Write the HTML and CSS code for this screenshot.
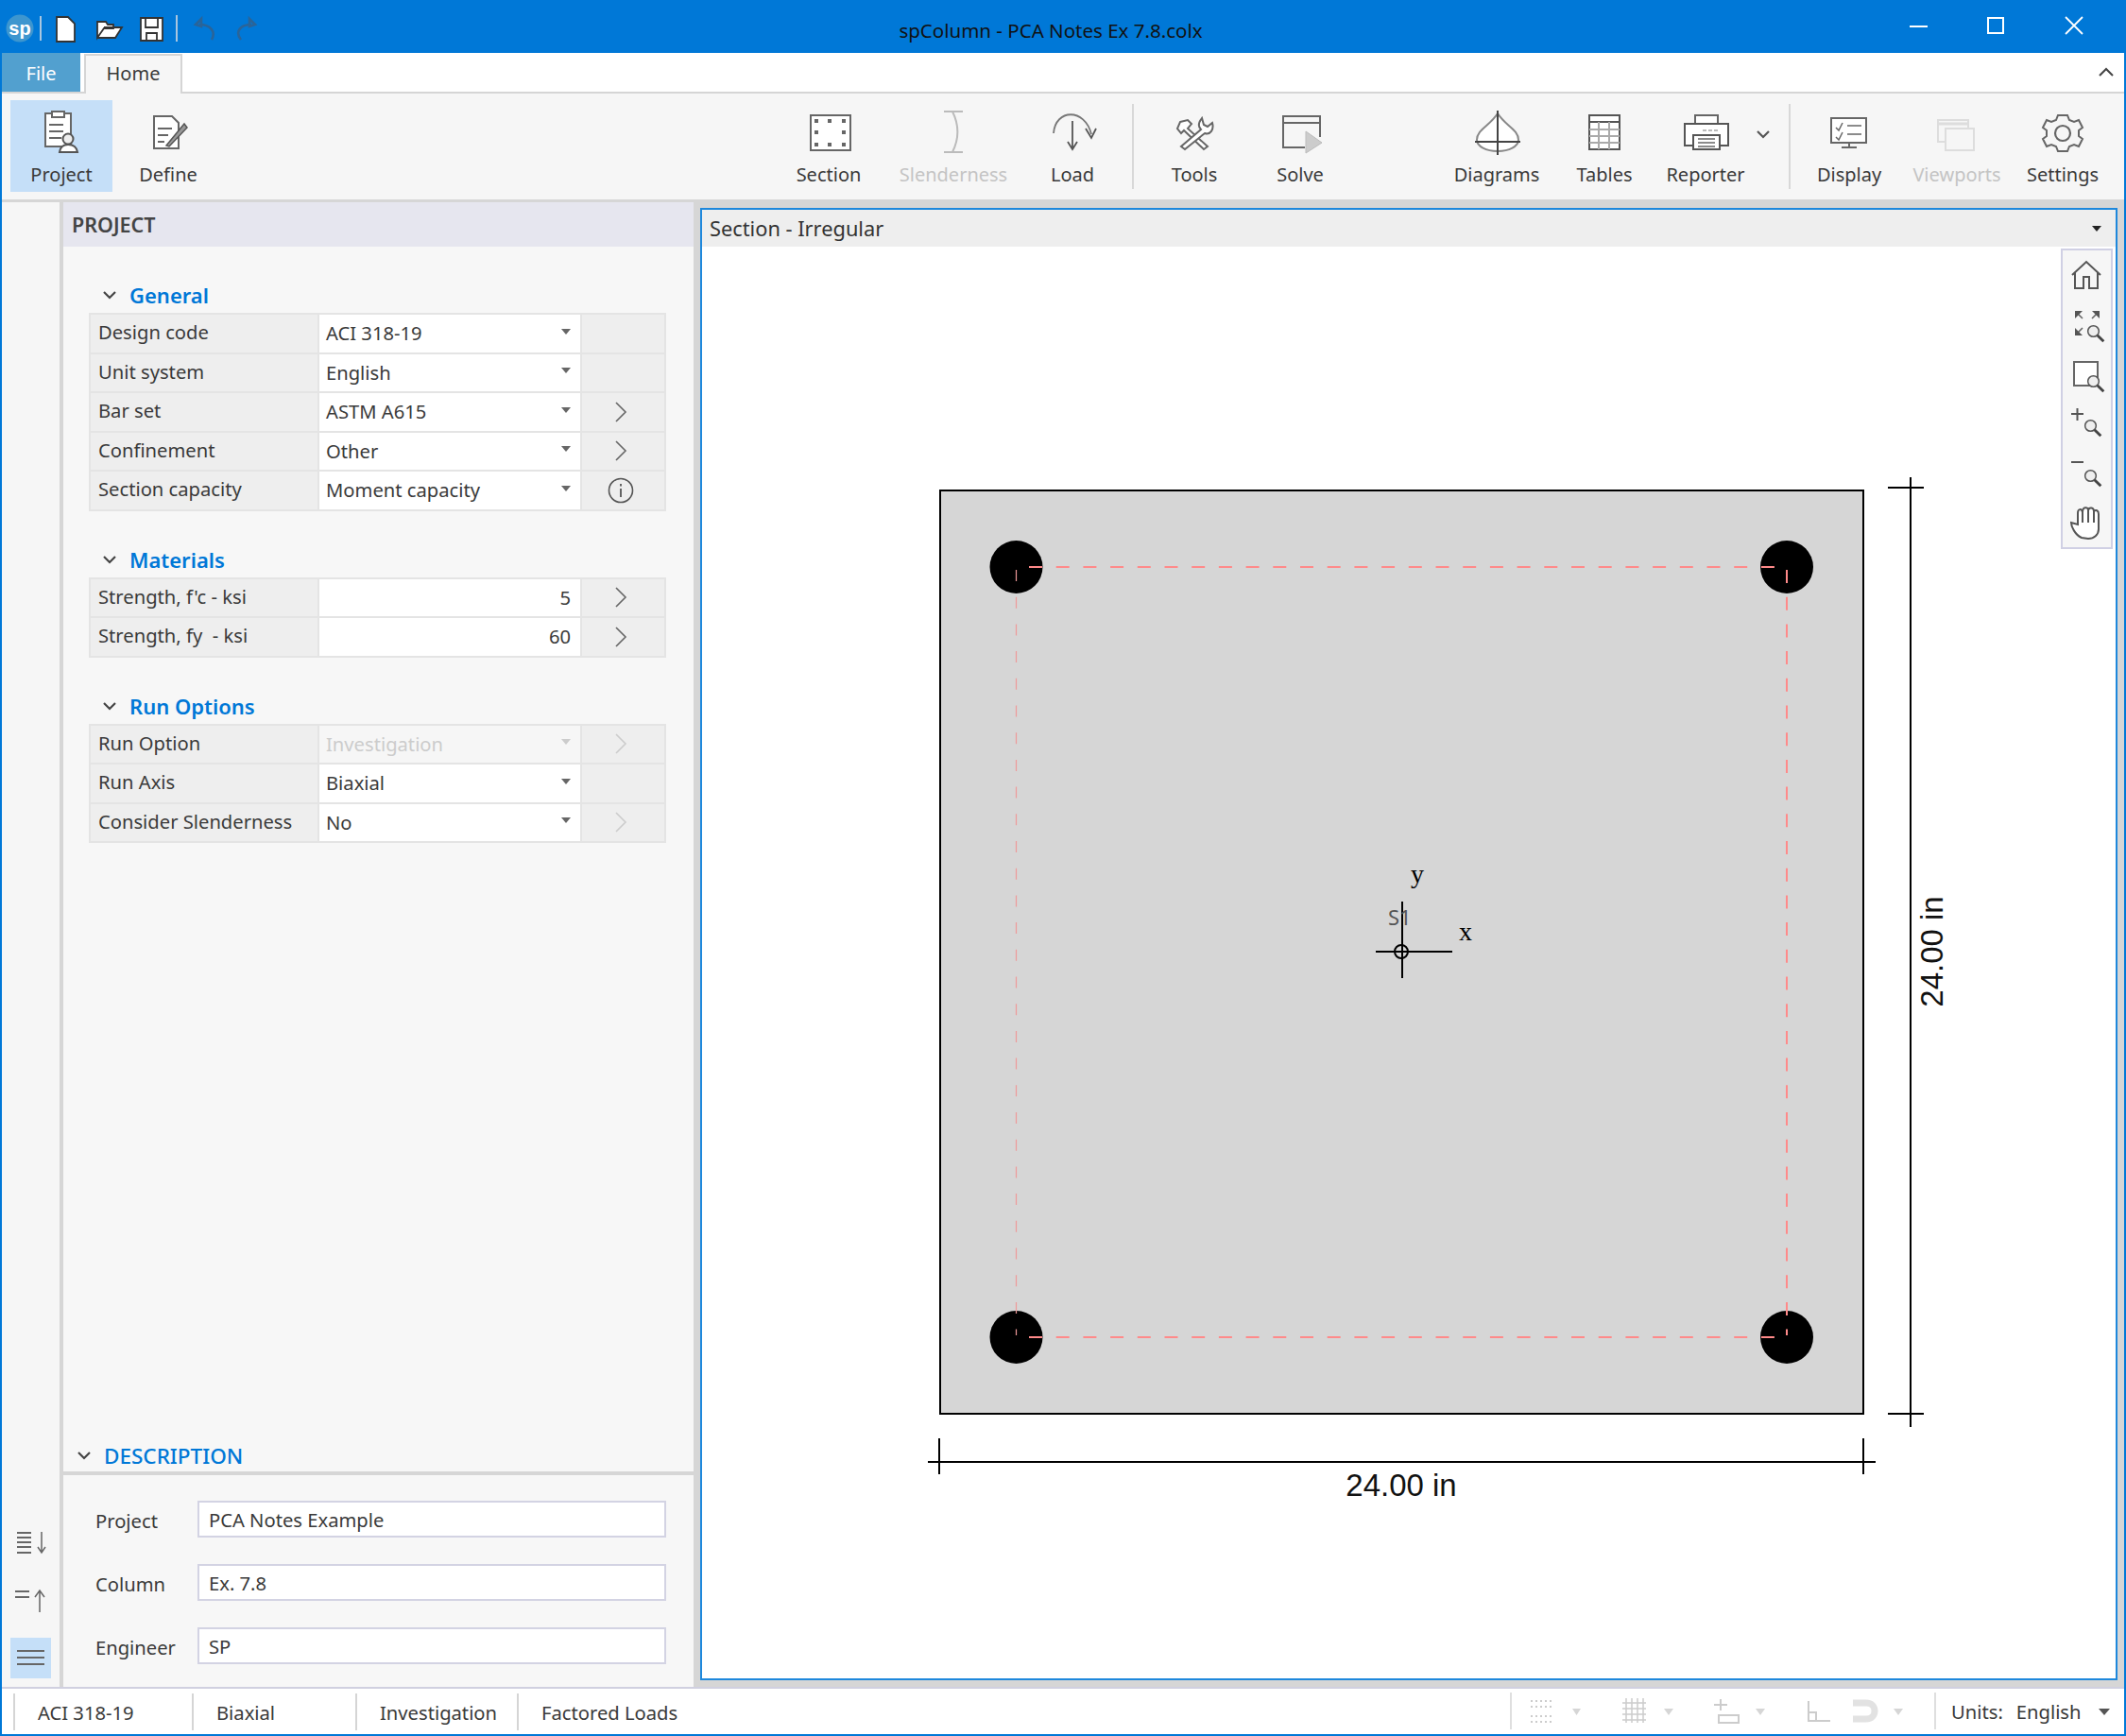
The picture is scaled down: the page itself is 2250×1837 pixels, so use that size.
FILE: index.html
```html
<!DOCTYPE html>
<html lang="en">
<head>
<meta charset="utf-8">
<title>spColumn - PCA Notes Ex 7.8.colx</title>
<link rel="stylesheet" href="styles.css">
</head>
<body>
<svg class="defs" width="0" height="0">
  <defs>
    <symbol id="chev-r" viewBox="0 0 16 24"><path d="M3 2 L13 12 L3 22" fill="none" stroke="currentColor" stroke-width="1.6"/></symbol>
    <symbol id="chev-d" viewBox="0 0 16 12"><path d="M2 3 L8 9 L14 3" fill="none" stroke="currentColor" stroke-width="2.2"/></symbol>
    <symbol id="mag" viewBox="0 0 24 24"><circle cx="9" cy="9" r="7" fill="#eee" stroke="#555" stroke-width="1.8"/><path d="M14 14 L22 22" stroke="#444" stroke-width="3.4"/></symbol>
  </defs>
</svg>
<div class="window">
  <header class="titlebar">
    <svg class="qat" viewBox="2 0 298 56">
      <circle cx="21" cy="30" r="14.5" fill="#3d96cf"/>
      <text x="21" y="37" class="sp-text" text-anchor="middle">sp</text>
      <path d="M43 17V43M187 16V44" stroke="#a9c6df" stroke-width="2"/>
      <path d="M60 18H72L79 25V44H60Z" fill="#fff" stroke="#333" stroke-width="1.8"/>
      <path d="M103 40V23H112L114 26H120V30H110L103 40ZM103 40H122L129 29H110" fill="#fff" stroke="#333" stroke-width="1.8"/>
      <path d="M149 19H172V43H149Z" fill="#fff" stroke="#333" stroke-width="1.8"/>
      <path d="M154 19V29H167V19M155 43V35H166V43" fill="none" stroke="#333" stroke-width="1.8"/>
      <path d="M207 26L213 20V28ZM211 26C222 26 229 33 224 42" fill="none" stroke="#2a6498" stroke-width="2.6"/>
      <path d="M270 26L264 20V28ZM266 26C255 26 248 33 255 42" fill="none" stroke="#2a6498" stroke-width="2.6"/>
    </svg>
    <div class="title">spColumn - PCA Notes Ex 7.8.colx</div>
    <svg class="winbtns" viewBox="1924 0 324 56">
      <path d="M2021 28H2040" stroke="#fff" stroke-width="2"/>
      <rect x="2104" y="19" width="16" height="16" fill="none" stroke="#fff" stroke-width="2"/>
      <path d="M2186 18L2204 36M2204 18L2186 36" stroke="#fff" stroke-width="1.8"/>
    </svg>
  </header>

  <nav class="tabs">
    <div class="tab-file">File</div>
    <div class="tab-home">Home</div>
    <svg class="collapse" viewBox="0 0 18 12"><path d="M2 10L9 3L16 10" fill="none" stroke="#444" stroke-width="2"/></svg>
  </nav>

  <section class="ribbon">
    <div class="rb active">
      <svg class="ri" viewBox="36 112 60 56"><path d="M49 120H76V155H49Z" fill="#fff" stroke="#666" stroke-width="2"/><path d="M56 124V118H69V124Z" fill="#fff" stroke="#666" stroke-width="2"/><path d="M53 132H68M53 139H68M53 146H66" stroke="#666" stroke-width="2"/><circle cx="73" cy="147" r="5.5" fill="#eee" stroke="#555" stroke-width="2"/><path d="M64 161C65 154 69 153 73 153C78 153 82 155 83 161Z" fill="#fff" stroke="#555" stroke-width="2"/></svg>
      <span>Project</span>
    </div>
    <div class="rb">
      <svg class="ri" viewBox="148 112 60 56"><path d="M163 123H182L189 130V157H163Z" fill="#fff" stroke="#666" stroke-width="2"/><path d="M167 136H182M167 143H178M167 150H174" stroke="#666" stroke-width="2"/><path d="M176 154L195 131L198 135L179 155Z" fill="#999" stroke="#555" stroke-width="1.5"/></svg>
      <span>Define</span>
    </div>
    <div></div>
    <div class="rb">
      <svg class="ri" viewBox="847 112 60 56"><rect x="858" y="122" width="42" height="37" fill="#fff" stroke="#666" stroke-width="2"/><g class="dots"><rect x="862" y="126" width="4" height="4"/><rect x="876" y="126" width="4" height="4"/><rect x="891" y="126" width="4" height="4"/><rect x="862" y="138" width="4" height="4"/><rect x="891" y="138" width="4" height="4"/><rect x="862" y="151" width="4" height="4"/><rect x="876" y="151" width="4" height="4"/><rect x="891" y="151" width="4" height="4"/></g></svg>
      <span>Section</span>
    </div>
    <div class="rb off">
      <svg class="ri" viewBox="979 112 60 56"><path d="M999 118H1019M999 161H1019M1008 118C1015 132 1015 147 1008 161" fill="none" stroke="#bbb" stroke-width="2"/></svg>
      <span>Slenderness</span>
    </div>
    <div class="rb">
      <svg class="ri" viewBox="1105 112 60 56"><path d="M1115 141C1117 115 1148 114 1155 142" fill="none" stroke="#777" stroke-width="1.8"/><path d="M1135 128V158M1130 150L1135 158L1140 150" fill="none" stroke="#555" stroke-width="1.8"/><path d="M1149 136L1155 146L1160 136" fill="none" stroke="#555" stroke-width="1.8"/></svg>
      <span>Load</span>
    </div>
    <div class="sep"></div>
    <div class="rb">
      <svg class="ri" viewBox="1234 112 60 56"><path d="M1249 129L1257 127L1261 131L1257 136L1278 155L1274 158L1253 138L1250 141L1246 136Z" fill="#fff" stroke="#666" stroke-width="2"/><path d="M1272 125C1268 130 1268 134 1271 137L1250 155L1254 158L1275 141C1281 143 1285 137 1283 130L1278 134L1274 132Z" fill="#fff" stroke="#666" stroke-width="2"/></svg>
      <span>Tools</span>
    </div>
    <div class="rb">
      <svg class="ri" viewBox="1346 112 60 56"><path d="M1381 156H1358V123H1397V145M1358 130H1397" fill="none" stroke="#666" stroke-width="2"/><path d="M1382 139L1399 151L1382 162Z" fill="#ccc" stroke="#bbb" stroke-width="1"/></svg>
      <span>Solve</span>
    </div>
    <div></div>
    <div class="rb">
      <svg class="ri" viewBox="1554 112 60 56"><path d="M1585 120C1577 133 1563 137 1563 148C1563 155 1573 160 1585 160C1597 160 1607 155 1607 148C1607 137 1593 133 1585 120Z" fill="#fff" stroke="#888" stroke-width="2"/><path d="M1585 117V164M1561 150H1609" stroke="#444" stroke-width="2"/></svg>
      <span>Diagrams</span>
    </div>
    <div class="rb">
      <svg class="ri" viewBox="1668 112 60 56"><rect x="1682" y="122" width="32" height="36" fill="#fff" stroke="#555" stroke-width="2"/><path d="M1682 129H1714" stroke="#555" stroke-width="2"/><path d="M1682 137H1714M1682 144H1714M1682 151H1714M1692 129V158M1703 129V158" stroke="#aaa" stroke-width="2"/></svg>
      <span>Tables</span>
    </div>
    <div class="rb">
      <svg class="ri" viewBox="1775 112 60 56"><rect x="1794" y="122" width="24" height="9" fill="#fff" stroke="#666" stroke-width="2"/><path d="M1791 154H1783V131H1829V154H1821" fill="#fff" stroke="#555" stroke-width="2"/><path d="M1792 143H1820V158H1792Z" fill="#fff" stroke="#555" stroke-width="2"/><path d="M1797 147H1815M1797 151H1815M1797 155H1815" stroke="#666" stroke-width="1.6"/><path d="M1802 138H1819" stroke="#777" stroke-width="1" stroke-dasharray="4 2"/></svg>
      <span>Reporter</span>
    </div>
    <div class="rb-more"><svg class="chev-more"><use href="#chev-d"/></svg></div>
    <div class="sep"></div>
    <div class="rb">
      <svg class="ri" viewBox="1927 112 60 56"><rect x="1938" y="125" width="37" height="26" fill="#fff" stroke="#666" stroke-width="2"/><path d="M1943 135L1946 138L1950 130M1943 145L1946 148L1950 140M1955 133H1970M1955 142H1970" fill="none" stroke="#666" stroke-width="1.5"/><path d="M1957 151V155M1949 156H1965" stroke="#666" stroke-width="2"/></svg>
      <span>Display</span>
    </div>
    <div class="rb off">
      <svg class="ri" viewBox="2041 112 60 56"><rect x="2051" y="127" width="32" height="23" fill="none" stroke="#ddd" stroke-width="2"/><path d="M2051 131H2083" stroke="#ddd" stroke-width="3"/><rect x="2059" y="136" width="30" height="23" fill="#f6f6f6" stroke="#ddd" stroke-width="2"/></svg>
      <span>Viewports</span>
    </div>
    <div class="rb">
      <svg class="ri" viewBox="2154 112 60 56"><circle cx="2184" cy="141" r="8" fill="none" stroke="#666" stroke-width="2.2"/><path d="M2179 122H2189L2191 127L2196 129L2201 127L2205 135L2201 138V144L2205 147L2201 155L2196 153L2191 155L2189 160H2179L2177 155L2172 153L2167 155L2163 147L2167 144V138L2163 135L2167 127L2172 129L2177 127Z" fill="none" stroke="#666" stroke-width="2"/></svg>
      <span>Settings</span>
    </div>
  </section>

  <main class="main">
    <aside class="sidebar">
      <div class="sb"><svg viewBox="11 1608 43 43"><path d="M18 1621H33M18 1626H33M18 1631H33M18 1636H33M18 1642H33" stroke="#666" stroke-width="2"/><path d="M44 1620V1642M40 1636L44 1642L48 1636" fill="none" stroke="#666" stroke-width="1.5"/></svg></div>
      <div class="sb"><svg viewBox="11 1671 43 43"><path d="M16 1684H31M16 1690H31" stroke="#666" stroke-width="2"/><path d="M42 1706V1684M37 1690L42 1683L47 1690" fill="none" stroke="#666" stroke-width="1.5"/></svg></div>
      <div class="sb on"><svg viewBox="11 1733 43 43"><path d="M18 1747H47M18 1754H47M18 1761H47" stroke="#666" stroke-width="2"/></svg></div>
    </aside>

    <section class="panel">
      <div class="panel-head">PROJECT</div>
      <div class="panel-body">
        <h3 class="grp"><svg class="chev"><use href="#chev-d"/></svg>General</h3>
        <div class="table">
          <div class="lbl">Design code</div><div class="val"><span>ACI 318-19</span><i class="tri"></i></div><div class="act"></div>
          <div class="lbl">Unit system</div><div class="val"><span>English</span><i class="tri"></i></div><div class="act"></div>
          <div class="lbl">Bar set</div><div class="val"><span>ASTM A615</span><i class="tri"></i></div><div class="act"><svg class="go"><use href="#chev-r"/></svg></div>
          <div class="lbl">Confinement</div><div class="val"><span>Other</span><i class="tri"></i></div><div class="act"><svg class="go"><use href="#chev-r"/></svg></div>
          <div class="lbl">Section capacity</div><div class="val"><span>Moment capacity</span><i class="tri"></i></div><div class="act"><svg class="info" viewBox="0 0 28 28"><circle cx="14" cy="14" r="12.5" fill="none" stroke="#555" stroke-width="1.6"/><path d="M14 12V21M14 7V9.500" stroke="#555" stroke-width="1.8"/></svg></div>
        </div>
        <h3 class="grp"><svg class="chev"><use href="#chev-d"/></svg>Materials</h3>
        <div class="table">
          <div class="lbl">Strength, f'c - ksi</div><div class="val num">5</div><div class="act"><svg class="go"><use href="#chev-r"/></svg></div>
          <div class="lbl">Strength, fy&nbsp; - ksi</div><div class="val num">60</div><div class="act"><svg class="go"><use href="#chev-r"/></svg></div>
        </div>
        <h3 class="grp"><svg class="chev"><use href="#chev-d"/></svg>Run Options</h3>
        <div class="table">
          <div class="lbl">Run Option</div><div class="val dis"><span>Investigation</span><i class="tri"></i></div><div class="act"><svg class="go faint"><use href="#chev-r"/></svg></div>
          <div class="lbl">Run Axis</div><div class="val"><span>Biaxial</span><i class="tri"></i></div><div class="act"></div>
          <div class="lbl">Consider Slenderness</div><div class="val"><span>No</span><i class="tri"></i></div><div class="act"><svg class="go faint"><use href="#chev-r"/></svg></div>
        </div>
      </div>
      <div class="desc-head"><svg class="chev"><use href="#chev-d"/></svg>DESCRIPTION</div>
      <div class="desc">
        <label class="fld"><span>Project</span><div class="inp">PCA Notes Example</div></label>
        <label class="fld"><span>Column</span><div class="inp">Ex. 7.8</div></label>
        <label class="fld"><span>Engineer</span><div class="inp">SP</div></label>
      </div>
    </section>

    <section class="view">
      <div class="view-head"><span>Section - Irregular</span><i class="tri dark"></i></div>
      <div class="canvas">
        <svg class="drawing" viewBox="743 261 1496 1515">
          <rect x="995" y="519" width="977" height="977" fill="#d6d6d6" stroke="#000" stroke-width="2"/>
          <g fill="#000">
            <circle cx="1075.5" cy="600" r="28"/><circle cx="1891" cy="600" r="28"/>
            <circle cx="1075.5" cy="1415" r="28"/><circle cx="1891" cy="1415" r="28"/>
          </g>
          <g class="rebar">
            <path d="M1089 600H1880" stroke-dasharray="14 14.7"/>
            <path d="M1089 1415H1880" stroke-dasharray="14 14.7"/>
            <path d="M1891 603V1413" stroke-dasharray="14 14.7"/>
            <path class="thin" d="M1075.5 603V1413" stroke-dasharray="12 16.7"/>
          </g>
          <g class="dim">
            <path d="M2022 505V1510M1998 516H2036M1998 1496H2036"/>
            <path d="M982 1547H1985M994 1522V1560M1972 1522V1560"/>
            <path d="M1484 954V1035M1456 1007H1537"/>
            <circle cx="1483" cy="1007" r="7" fill="none"/>
          </g>
          <text x="1483" y="1583" class="dimtxt" text-anchor="middle">24.00 in</text>
          <text class="dimtxt" text-anchor="middle" transform="translate(2056 1007) rotate(-90)">24.00 in</text>
          <text x="1500" y="934" class="axis" text-anchor="middle">y</text>
          <text x="1551" y="995" class="axis" text-anchor="middle">x</text>
          <text x="1469" y="979" class="s1">S1</text>
        </svg>
        <div class="vtools">
          <svg viewBox="2181 265 55 316">
            <path d="M2193 291L2208 277L2223 291M2196 288V305H2205V293H2211V305H2220V288" fill="none" stroke="#555" stroke-width="2"/>
            <path d="M2197 330L2204 337M2221 330L2214 337M2197 354L2204 347" stroke="#666" stroke-width="1.6"/>
            <path d="M2196 329H2204L2196 337ZM2222 329H2214L2222 337ZM2196 355V347L2204 355Z" fill="#555"/>
            <use href="#mag" x="2208" y="343" width="20" height="20"/>
            <rect x="2195" y="383" width="25" height="25" fill="#fff" stroke="#666" stroke-width="2"/>
            <use href="#mag" x="2208" y="396" width="20" height="20"/>
            <path d="M2192 438H2205M2198.500 432V445" stroke="#555" stroke-width="2"/>
            <use href="#mag" x="2205" y="443" width="20" height="20"/>
            <path d="M2192 489H2205" stroke="#555" stroke-width="2"/>
            <use href="#mag" x="2205" y="496" width="20" height="20"/>
            <path d="M2203 569C2196 566 2192 557 2192 553L2199 555V543C2199 538 2203 538 2204 542C2204 536 2210 536 2210 540C2211 536 2216 537 2216 541C2218 539 2221 540 2221 544V560C2221 566 2216 570 2210 570Z" fill="#fff" stroke="#555" stroke-width="2"/>
            <path d="M2204 542V553M2210 540V553M2216 541V553" stroke="#555" stroke-width="2"/>
          </svg>
        </div>
      </div>
    </section>
  </main>

  <footer class="status">
    <div class="st st1">ACI 318-19</div>
    <div class="st st2">Biaxial</div>
    <div class="st st3">Investigation</div>
    <div class="st st4">Factored Loads</div>
    <svg class="st-icons" viewBox="1598 1787 452 48">
      <path d="M1599 1791V1830M2048 1791V1830" stroke="#d5d5d5" stroke-width="1.5"/>
      <path d="M1620 1800H1643M1620 1806H1643M1620 1816H1643M1620 1822H1643" stroke="#ccc" stroke-width="2" stroke-dasharray="2 3"/>
      <path d="M1664 1808H1673L1668.500 1815Z M1761 1808H1771L1766 1815Z M1858 1808H1868L1863 1815Z M2004 1808H2014L2009 1815Z" fill="#d6d6d6"/>
      <path d="M1717 1802H1742M1717 1808H1742M1717 1814H1742M1717 1820H1742M1721 1797V1823M1727 1797V1823M1733 1797V1823M1739 1797V1823" stroke="#ccc" stroke-width="1.5"/>
      <path d="M1821 1798V1810M1814 1804H1828" stroke="#ccc" stroke-width="2"/><rect x="1819" y="1815" width="21" height="8" fill="none" stroke="#ccc" stroke-width="2"/>
      <path d="M1914 1800V1821H1937M1914 1812H1922V1821" fill="none" stroke="#ccc" stroke-width="2"/>
      <path d="M1961 1802H1975C1987 1802 1987 1819 1975 1819H1961" fill="none" stroke="#e2e2e2" stroke-width="7"/>
    </svg>
    <div class="units"><span>Units:</span><span>English</span><i class="tri dark2"></i></div>
  </footer>
</div>
</body>
</html>
```
FILE: styles.css
```css
* { box-sizing: border-box; }
html, body { margin: 0; padding: 0; background: #fff; }
body { font-family: "Noto Sans", "Open Sans", sans-serif; font-size: 20.200px; color: #3a3a3a; }
.defs { position: absolute; }

.window {
  width: 2250px; height: 1837px;
  border: solid #0078d7; border-width: 0 2px 2px;
  display: flex; flex-direction: column; overflow: hidden;
}

.titlebar { height: 56px; flex: none; background: #0078d7; display: flex; align-items: stretch; }
.qat { width: 298px; height: 56px; flex: none; }
.sp-text { font: 700 20px "Liberation Sans", sans-serif; fill: #fff; }
.title { flex: 1; text-align: center; line-height: 64px; color: #111; font-size: 20.500px; white-space: nowrap; }
.winbtns { width: 324px; height: 56px; flex: none; }

.tabs { height: 43px; flex: none; display: flex; align-items: flex-start; background: #fff; box-shadow: inset 0 -2px #d5d5d5; }
.tab-file { width: 83px; height: 41px; background: #52a0cf; color: #fff; text-align: center; line-height: 43px; font-size: 20px; }
.tab-home { width: 104px; height: 42px; margin: 1px 0 0 4px; background: #f6f6f6; border: solid #d5d5d5; border-width: 2px 2px 0; text-align: center; line-height: 38px; font-size: 20px; }
.collapse { width: 18px; height: 12px; margin: 14px 10px 0 auto; }

.ribbon {
  height: 112px; flex: none; background: #f6f6f6; padding: 7px 10px 8px 9px;
  display: grid;
  grid-template-columns: 108px 118px 1fr 132px 132px 120px 9px 120px 104px 102px 108px 120px 94px 38px 10px 114px 114px 110px;
}
.rb { display: flex; flex-direction: column; align-items: center; height: 97px; white-space: nowrap; }
.rb span { line-height: 26px; margin-top: 4px; font-size: 20px; }
.rb.active { background: #c5dff8; }
.rb.off span { color: #c4c4c4; }
.ri { width: 60px; height: 56px; margin-top: 6px; flex: none; }
.dots { fill: #666; }
.rb-more { display: flex; align-items: flex-start; padding: 30px 0 0 6px; }
.chev-more { width: 16px; height: 12px; color: #555; }
.sep { border-left: 2px solid #d8d8d8; margin: 4px 0 3px 3px; width: 2px; height: 90px; }

.main { flex: 1; min-height: 0; display: flex; background: #d6d6d6; padding-top: 3px; }
.sidebar { width: 61px; flex: none; background: #f6f6f6; display: flex; flex-direction: column; justify-content: flex-end; gap: 19px; padding: 0 9px 9px; }
.sb { width: 43px; height: 43px; }
.sb svg { width: 43px; height: 43px; display: block; }
.sb.on { background: #c5dff8; }

.panel { width: 667px; margin-left: 4px; flex: none; background: #f7f7f7; display: flex; flex-direction: column; }
.panel-head { height: 47px; flex: none; background: #e6e6ef; padding-left: 9px; line-height: 47px; font-weight: 600; color: #444; font-size: 21.500px; }
.panel-body { flex: 1; padding: 36px 29px 0 27px; }
.grp { margin: 0; height: 34px; display: flex; align-items: center; gap: 13px; color: #0078d7; font-size: 22px; font-weight: 600; padding: 0 0 4px 14px; }
.grp:not(:first-child) { margin-top: 36px; }
.chev { width: 16px; height: 12px; color: #444; flex: none; }
.table { display: grid; grid-template-columns: 240px 276px 1fr; grid-auto-rows: 39.5px; gap: 2px; padding: 2px; background: #e4e4e4; }
.lbl { background: #eee; padding-left: 8px; line-height: 36px; white-space: nowrap; }
.val { background: #fff; padding: 0 10px 0 7px; display: flex; align-items: center; justify-content: space-between; line-height: 39px; }
.val.num { justify-content: flex-end; }
.val.dis { background: #f6f6f6; color: #ccc; }
.val.dis .tri { border-top-color: #ccc; }
.act { background: #eee; display: flex; align-items: center; justify-content: center; }
.go { width: 16px; height: 24px; color: #666; margin-right: 5px; }
.go.faint { color: #ccc; }
.info { width: 28px; height: 28px; margin-right: 5px; }
.tri { width: 0; height: 0; border: solid transparent; border-width: 6px 5px 0; border-top-color: #666; flex: none; margin-top: -4px; }
.tri.dark { border-top-color: #222; margin: 0; }
.tri.dark2 { border-top-color: #555; border-width: 7px 6px 0; margin: 0 0 0 4px; }

.desc-head { height: 38px; flex: none; display: flex; align-items: center; gap: 13px; padding: 4px 0 0 14px; color: #0078d7; font-size: 22.500px; font-weight: 500; }
.desc { flex: none; border-top: 4px solid #d6d6d6; padding: 27px 29px 24px 34px; display: flex; flex-direction: column; gap: 28px; }
.fld { display: flex; align-items: center; height: 39px; }
.fld > span { width: 108px; flex: none; margin-top: 2px; }
.inp { flex: 1; height: 39px; background: #fff; border: 2px solid #d3d3e3; padding-left: 10px; line-height: 36px; }

.view { width: 1500px; margin: 6px 7px 7px 7px; border: 2px solid #1e88dc; flex: none; display: flex; flex-direction: column; background: #fff; }
.view-head { height: 39px; flex: none; background: #eee; padding: 0 15px 0 8px; display: flex; justify-content: space-between; align-items: center; font-size: 21.800px; color: #333; }
.canvas { flex: 1; min-height: 0; position: relative; }
.drawing { width: 1496px; height: 1515px; display: block; }
.rebar path { stroke: #ff8a8a; stroke-width: 2; fill: none; }
.rebar path.thin { stroke-width: 1.2; stroke: #e99; }
.dim path, .dim circle { stroke: #000; stroke-width: 2; }
.dimtxt { font: 33px "Liberation Sans", sans-serif; fill: #111; }
.axis { font: 28px "Liberation Serif", serif; fill: #000; }
.s1 { font: 22px "Noto Sans", sans-serif; fill: #555; }
.vtools { position: absolute; top: 4px; right: 3px; width: 55px; height: 316px; background: #f6f6f6; border: solid #d0d0e4; border-width: 0 2px 2px 2px; box-shadow: 0 -2px 0 #d0d0e4; }
.vtools svg { position: absolute; left: -2px; top: 0; width: 55px; height: 316px; display: block; }

.status { height: 50px; flex: none; background: #fff; border-top: 2px solid #d0d0e0; display: flex; align-items: center; padding-left: 12px; white-space: nowrap; }
.st { height: 39px; border-left: 2px solid #d5d5d5; line-height: 40px; padding-left: 24px; }
.st1 { width: 189px; }
.st2 { width: 173px; }
.st3 { width: 171px; }
.st4 { width: 200px; }
.st-icons { width: 452px; height: 48px; margin-left: auto; flex: none; }
.units { width: 198px; flex: none; display: flex; align-items: center; gap: 14px; padding-left: 15px; }
```
